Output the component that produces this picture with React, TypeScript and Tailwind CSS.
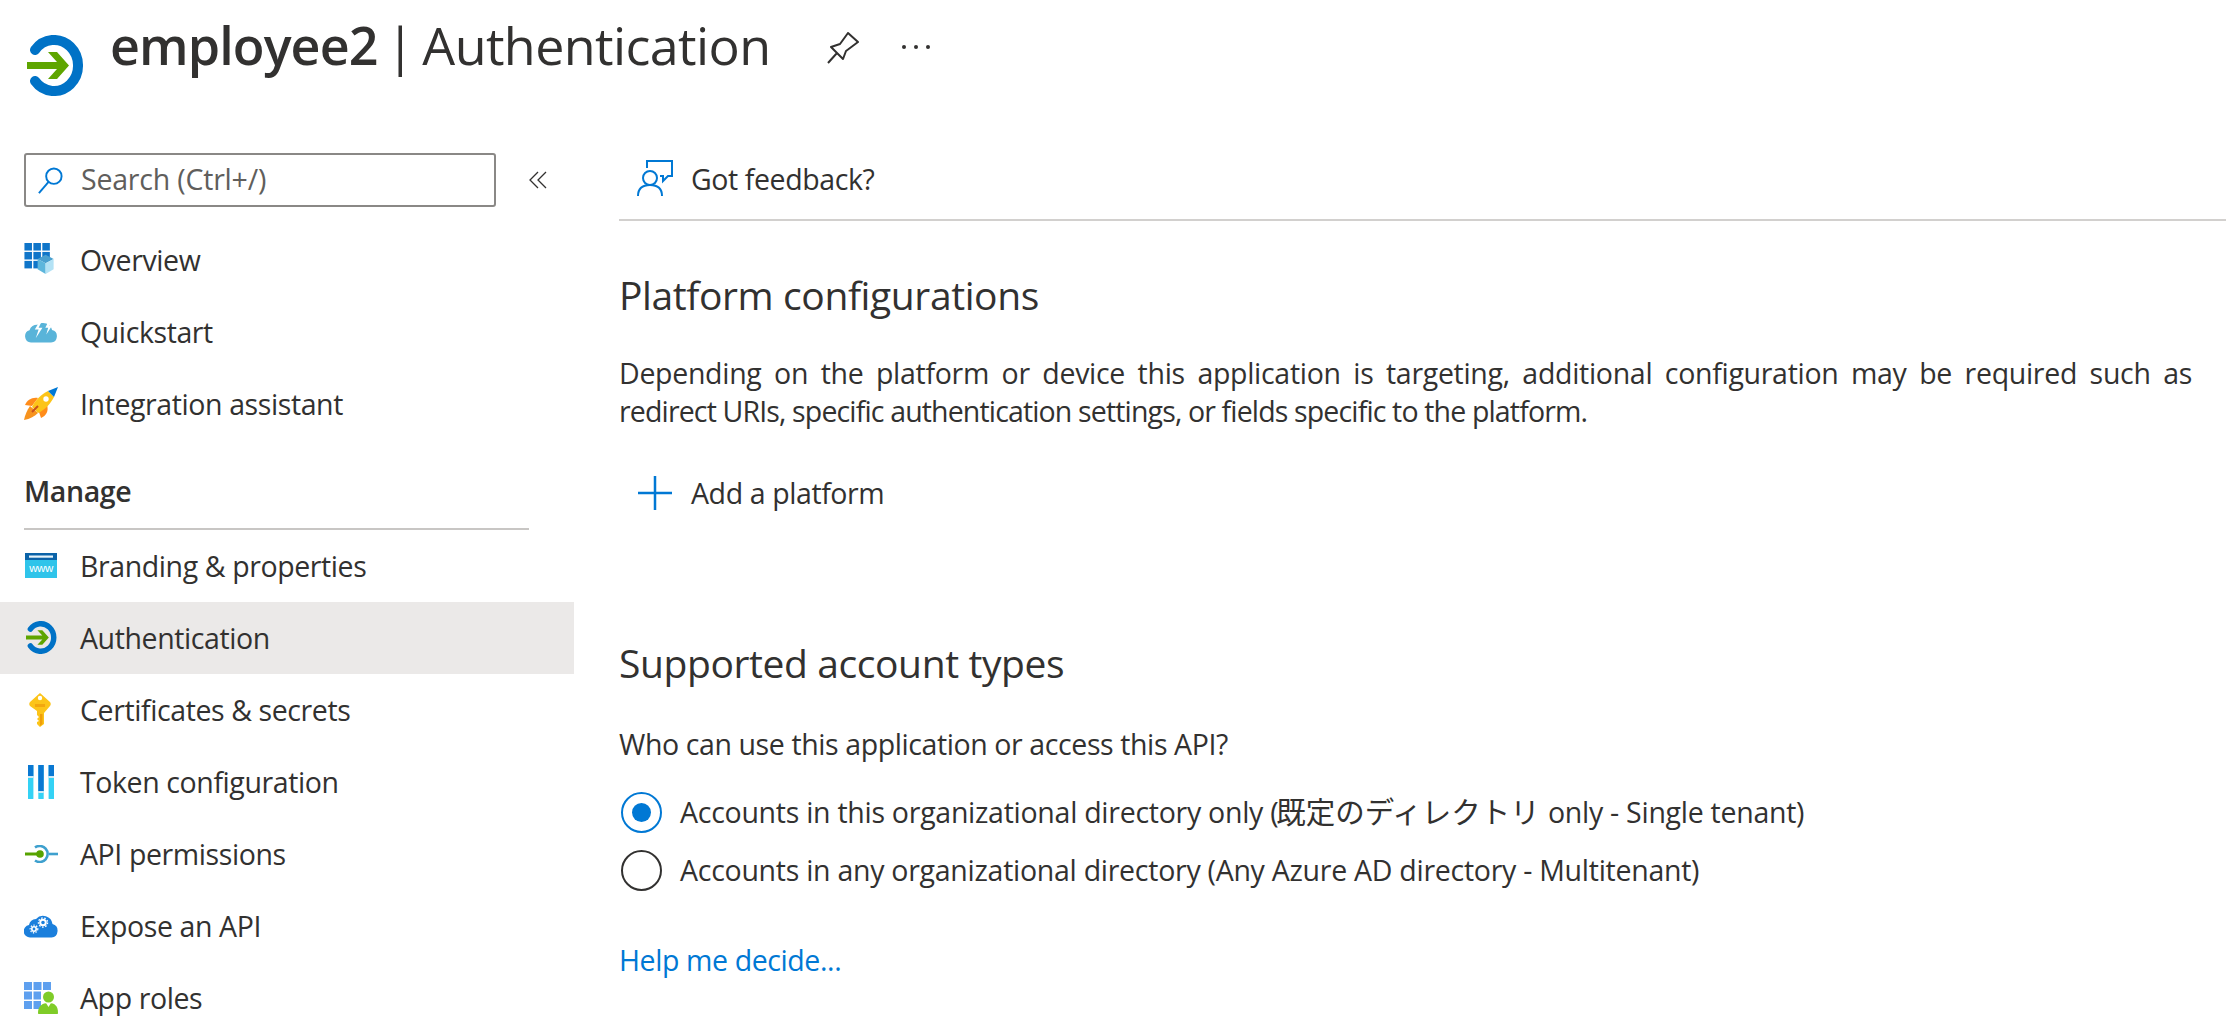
import { ReactNode } from "react";

function AuthIcon({ width, height }: { width: number; height: number }) {
  return (
    <svg width={width} height={height} viewBox="0 0 57 61" fill="none" preserveAspectRatio="none">
      <path d="M8 15 A24 25.500 0 1 1 8 46" stroke="#0072c6" strokeWidth="10" strokeLinecap="round" />
      <path d="M0 27H30L21 17H30L42 30.500 30 44H21L30 34H0z" fill="#5ea500" />
    </svg>
  );
}

function OverviewIcon() {
  return (
    <svg width="31" height="32" viewBox="0 0 32 34">
      <g fill="#0f75c9">
        <rect x="0" y="0" width="8" height="8" />
        <rect x="9.500" y="0" width="8" height="8" />
        <rect x="19" y="0" width="8" height="8" />
        <rect x="0" y="9.500" width="8" height="8" />
        <rect x="9.500" y="9.500" width="8" height="8" />
        <rect x="19" y="9.500" width="8" height="8" />
        <rect x="0" y="19" width="8" height="8" />
        <rect x="9.500" y="19" width="8" height="8" />
      </g>
      <path d="M14 17l8.500-4.500L31 17l-8.500 4.500z" fill="#4aa0cf" />
      <path d="M14 17v11l8.500 5V21.500z" fill="#5db6dc" />
      <path d="M31 17v11l-8.500 5V21.500z" fill="#b3e2f5" />
    </svg>
  );
}

function QuickstartIcon() {
  return (
    <svg width="34" height="23" viewBox="0 0 35 24">
      <path d="M7 23.500A6.500 6.500 0 0 1 5.500 10.800 8 8 0 0 1 14 5a9.500 9.500 0 0 1 15 5.500 6.600 6.600 0 0 1-1 13z" fill="#59b4d9" />
      <path d="M17 0L11 10h4l-3 9 7-11h-4l4-8z" fill="#fff" />
      <path d="M26 0l-4 8h3l-2 7 6-9h-3l2-6z" fill="#fff" />
    </svg>
  );
}

function RocketIcon() {
  return (
    <svg width="34" height="33" viewBox="0 0 34 33">
      <path d="M14 11C8 10 3 13 1 18l7 1z" fill="#ff8c1a" />
      <path d="M23 18c2 6-1 11-6 13l-2-6z" fill="#ff8c1a" />
      <path d="M6 19C3 23 1 28 0 33c6-1 11-4 14-7z" fill="#f7931e" />
      <path d="M24 4C18 7 11 13 8 20l6 6c7-3 13-10 16-16z" fill="#fcc419" />
      <path d="M34 0L24 4l6 6z" fill="#0078d4" />
      <circle cx="22" cy="12" r="2.700" fill="#fff" />
      <path d="M8 25l6-6" stroke="#c8501e" strokeWidth="2" />
    </svg>
  );
}

function BrandingIcon() {
  return (
    <svg width="32" height="25" viewBox="0 0 32 25">
      <rect width="32" height="7" fill="#0b63a8" />
      <rect y="7" width="32" height="18" fill="#2fc4ea" />
      <rect x="4" y="2.500" width="24" height="2.200" fill="#e6f4fb" />
      <text x="16" y="19" textAnchor="middle" fontSize="11.500" fontFamily="Liberation Sans, sans-serif" fill="#fff">www</text>
    </svg>
  );
}

function KeyIcon() {
  return (
    <svg width="22" height="34" viewBox="0 0 22 34">
      <path d="M11 0l10 9c1 1 1 3 0 4l-6 7v11l-4 3-3-3v-2l2-1-2-2 2-2-2-2v-4l-7-5c-1-1-1-3 0-4z" fill="#fcc419" />
      <path d="M11 21h2.500v10L11 33z" fill="#ef9f0a" />
      <rect x="6" y="11" width="10" height="3" fill="#f2a70f" />
      <circle cx="11" cy="5" r="2.200" fill="#fff" />
    </svg>
  );
}

function TokenIcon() {
  const tops = [11, 26, 11];
  return (
    <svg width="26" height="34" viewBox="0 0 26 34">
      {[0, 10.300, 20.600].map((x, i) => (
        <g key={x}>
          <rect x={x} y="0" width="5.400" height="34" rx="0.500" fill="#34d2f5" />
          <rect x={x} y="0" width="5.400" height={tops[i]} fill="#0a78d2" />
          <rect x={x} y={tops[i]} width="5.400" height="2" fill="#cfeaf5" />
        </g>
      ))}
    </svg>
  );
}

function ApiIcon() {
  return (
    <svg width="33" height="18" viewBox="0 0 33 18" fill="none">
      <path d="M10 2.500A8 8 0 1 1 10 15.500" stroke="#3ea0ce" strokeWidth="2.600" />
      <path d="M24 9h9" stroke="#3ea0ce" strokeWidth="2.600" />
      <path d="M0 9h15" stroke="#57a300" strokeWidth="3" />
      <circle cx="15" cy="9" r="3.800" fill="#57a300" />
    </svg>
  );
}

function ExposeIcon() {
  return (
    <svg width="34" height="25" viewBox="0 0 34 25">
      <path d="M6.500 24.500A6.300 6.300 0 0 1 5 12 7.500 7.500 0 0 1 12 6 9.500 9.500 0 0 1 28.500 11a6.900 6.900 0 0 1-1 13.500z" fill="#1b7fdc" />
      <circle cx="19" cy="9.500" r="2.800" fill="none" stroke="#fff" strokeWidth="2" />
      <circle cx="19" cy="9.500" r="4.600" fill="none" stroke="#fff" strokeWidth="1.300" strokeDasharray="1.600 1.600" />
      <circle cx="10" cy="16" r="2.200" fill="none" stroke="#fff" strokeWidth="1.600" />
      <circle cx="10" cy="16" r="3.800" fill="none" stroke="#fff" strokeWidth="1.200" strokeDasharray="1.400 1.400" />
    </svg>
  );
}

function AppRolesIcon() {
  return (
    <svg width="34" height="32" viewBox="0 0 34 32">
      <g fill="#5ea0ef">
        <rect x="0" y="0" width="8" height="8" />
        <rect x="9.500" y="0" width="8" height="8" />
        <rect x="19" y="0" width="8" height="8" />
        <rect x="0" y="9.500" width="8" height="8" />
        <rect x="9.500" y="9.500" width="8" height="8" />
        <rect x="19" y="9.500" width="8" height="8" />
        <rect x="0" y="19" width="8" height="8" />
        <rect x="9.500" y="19" width="8" height="8" />
      </g>
      <rect x="17" y="9" width="17" height="23" fill="#fff" />
      <circle cx="24.500" cy="15" r="5.500" fill="#7fcc28" />
      <path d="M14 31c0-7 4-10 10.500-10S34 24 34 31c0 .6-.4 1-1 1H15c-.6 0-1-.4-1-1z" fill="#7fcc28" />
      <path d="M22 21h5l-2.500 4z" fill="#fff" />
    </svg>
  );
}

function NavRow({ icon, label, active }: { icon: ReactNode; label: string; active?: boolean }) {
  return (
    <div className={`flex h-[72px] items-center ${active ? "bg-[#ebe9e8]" : ""}`}>
      <div className="flex w-[80px] shrink-0 justify-start pl-[24px]">{icon}</div>
      <span className="pt-[2px] text-[28.500px] text-[#323130]">{label}</span>
    </div>
  );
}

function Radio({ checked, label }: { checked?: boolean; label: ReactNode }) {
  return (
    <div className="flex items-center">
      <div
        className={`flex h-[41px] w-[41px] shrink-0 items-center justify-center rounded-full border-[2px] ${
          checked ? "border-[#0078d4]" : "border-[#323130]"
        }`}
      >
        {checked ? <div className="h-[19px] w-[19px] rounded-full bg-[#0078d4]" /> : null}
      </div>
      <span className="ml-[18px] text-[28.500px] leading-[41px] tracking-[-0.27px] text-[#323130]">{label}</span>
    </div>
  );
}

export default function App() {
  return (
    <div className="h-[1035px] w-[2226px] overflow-hidden bg-white font-['Open_Sans','Noto_Sans_CJK_JP',sans-serif] tracking-[-0.4px]">
      <header className="flex h-[153px] items-start pl-[27px]">
        <div className="mt-[35px]">
          <AuthIcon width={57} height={61} />
        </div>
        <h1 className="ml-[26px] mt-[10px] text-[52px] leading-[70px] tracking-[-0.6px] text-[#323130] [word-spacing:-4.500px]">
          <span className="font-semibold tracking-[-0.9px]">employee2</span> | Authentication
        </h1>
        <svg className="ml-[56px] mt-[32px]" width="32" height="32" viewBox="0 0 32 32" fill="none" stroke="#323130" strokeWidth="2">
          <path d="M1 31L10 21M21 1L31 10 19 19 16 27 4 15 13 12z" strokeLinejoin="round" />
        </svg>
        <div className="ml-[43px] mt-[45px] flex gap-[8px]">
          <div className="h-[4px] w-[4px] rounded-full bg-[#323130]" />
          <div className="h-[4px] w-[4px] rounded-full bg-[#323130]" />
          <div className="h-[4px] w-[4px] rounded-full bg-[#323130]" />
        </div>
      </header>

      <div className="flex">
        <aside className="w-[574px] shrink-0">
          <div className="flex h-[70px] items-start pl-[24px]">
            <div className="flex h-[54px] w-[472px] items-center rounded-[3px] border-[2px] border-[#8a8886] pl-[11px]">
              <svg width="27" height="27" viewBox="0 0 26 28" fill="none" stroke="#0078d4" strokeWidth="2">
                <circle cx="16.500" cy="9.500" r="8" />
                <path d="M11 15.500L1 27" />
              </svg>
              <span className="ml-[17px] pb-[2px] text-[28.500px] tracking-[-0.2px] text-[#605e5c]">Search (Ctrl+/)</span>
            </div>
            <svg className="ml-[33px] mt-[18px]" width="18" height="18" viewBox="0 0 18 18" fill="none" stroke="#323130" strokeWidth="1.300">
              <path d="M9 1L1 9l8 8M17 1L9 9l8 8" />
            </svg>
          </div>

          <NavRow icon={<OverviewIcon />} label="Overview" />
          <NavRow icon={<QuickstartIcon />} label="Quickstart" />
          <NavRow icon={<RocketIcon />} label="Integration assistant" />

          <div className="flex h-[89px] items-end pb-[15px] pl-[24px]">
            <span className="text-[28.500px] font-semibold text-[#323130]">Manage</span>
          </div>
          <div className="ml-[24px] h-[1.500px] w-[505px] bg-[#c8c6c4]" />

          <NavRow icon={<div className="pl-[1px]"><BrandingIcon /></div>} label="Branding & properties" />
          <NavRow icon={<div className="pl-[2px]"><AuthIcon width={31} height={33} /></div>} label="Authentication" active />
          <NavRow icon={<div className="pl-[5px]"><KeyIcon /></div>} label="Certificates & secrets" />
          <NavRow icon={<div className="pl-[4px]"><TokenIcon /></div>} label="Token configuration" />
          <NavRow icon={<div className="pl-[1px]"><ApiIcon /></div>} label="API permissions" />
          <NavRow icon={<ExposeIcon />} label="Expose an API" />
          <NavRow icon={<AppRolesIcon />} label="App roles" />
        </aside>

        <main className="min-w-0 flex-1 pl-[45px]">
          <div className="flex h-[68px] items-start border-b-[2px] border-[#d2d0ce] pl-[18px] pb-[14px]">
            <svg className="mt-[7px]" width="36" height="36" viewBox="0 0 36 36" fill="none" stroke="#0078d4" strokeWidth="2">
              <path d="M10 8V1h25v15h-4l-5 5v-5h-3" />
              <circle cx="13" cy="18" r="7" />
              <path d="M1 36c0-8 5-11 12-11s12 3 12 11" />
            </svg>
            <span className="ml-[18px] mt-[5px] text-[28.500px] text-[#323130]">Got feedback?</span>
          </div>

          <h2 className="mt-[49px] text-[39px] leading-[50px] text-[#323130]">Platform configurations</h2>
          <div className="mt-[34px] w-[1573px] text-[28.500px] leading-[38px] text-[#323130]">
            <p className="tracking-[-0.3px] [text-align-last:justify]">
              Depending on the platform or device this application is targeting, additional configuration may be required such as
            </p>
            <p className="tracking-[-0.85px]">
              redirect URIs, specific authentication settings, or fields specific to the platform.
            </p>
          </div>

          <div className="mt-[38px] flex h-[50px] items-center pl-[18px]">
            <svg width="36" height="36" viewBox="0 0 36 36" stroke="#0078d4" strokeWidth="2.500">
              <path d="M18 1v34M1 18h34" />
            </svg>
            <span className="ml-[18px] text-[28.500px] text-[#323130]">Add a platform</span>
          </div>

          <h2 className="mt-[120px] text-[39px] leading-[50px] text-[#323130]">Supported account types</h2>
          <p className="mt-[37px] text-[28.500px] leading-[38px] text-[#323130]">Who can use this application or access this API?</p>

          <div className="mt-[28px] flex flex-col gap-[17px] pl-[2px]">
            <Radio
              checked
              label={
                <>
                  Accounts in this organizational directory only (<span className="-ml-[2px] mr-[1px] text-[29.500px] tracking-[0px]">既定のディレクトリ</span> only - Single tenant)
                </>
              }
            />
            <Radio label="Accounts in any organizational directory (Any Azure AD directory - Multitenant)" />
          </div>

          <p className="mt-[50px] text-[28.500px] leading-[38px] text-[#0078d4]">Help me decide...</p>
        </main>
      </div>
    </div>
  );
}
